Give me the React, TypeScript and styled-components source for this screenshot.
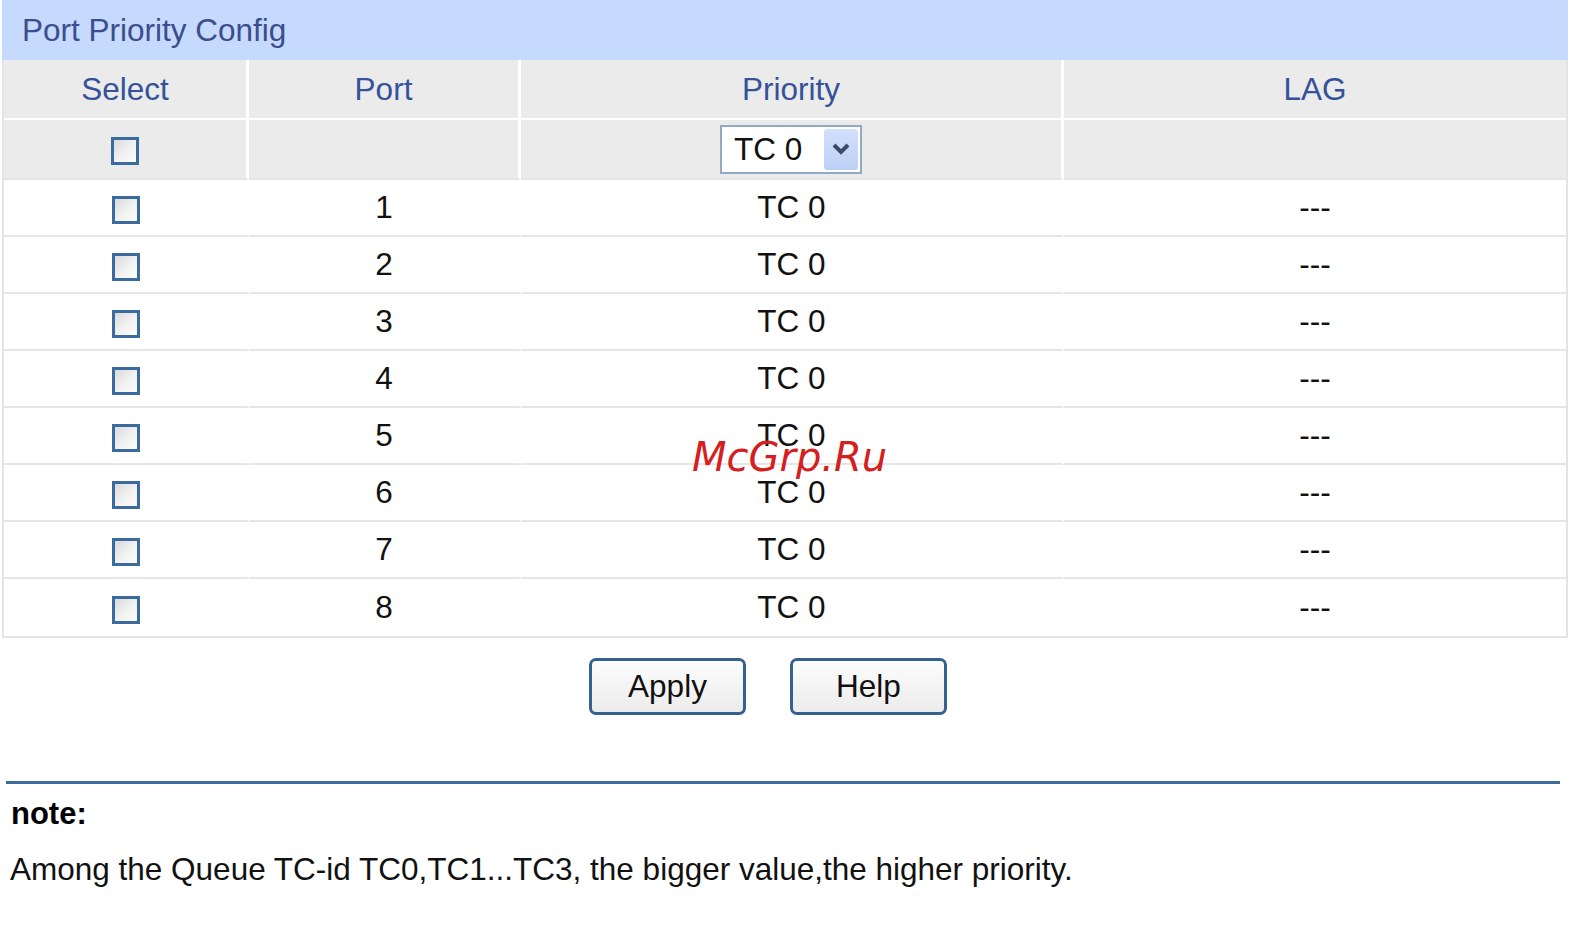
import React from 'react'
import styled, { createGlobalStyle } from 'styled-components'

const GlobalStyle = createGlobalStyle`
  html, body {
    margin: 0;
    padding: 0;
    background: #ffffff;
    font-family: "Liberation Sans", Arial, sans-serif;
  }
`

const Page = styled.div`
  position: relative;
  width: 1589px;
  height: 931px;
  padding-left: 2px;
  box-sizing: border-box;
  overflow: hidden;
`

const TitleBar = styled.div`
  width: 1566px;
  height: 60px;
  background: #c6d9fe;
  color: #3b4d8c;
  font-size: 31.5px;
  display: flex;
  align-items: center;
  padding-left: 20px;
  box-sizing: border-box;
`

const Table = styled.table`
  width: 1566px;
  border-collapse: separate;
  border-spacing: 0;
  table-layout: fixed;
  border-left: 2px solid #e4e4e4;
  border-right: 2px solid #e4e4e4;
  border-bottom: 2px solid #e4e4e4;
  font-size: 31.5px;
`

const HeadCell = styled.th`
  height: 60px;
  box-sizing: border-box;
  padding: 0;
  font-weight: normal;
  color: #34529a;
  background: #ebebeb;
  border-right: 3px solid #ffffff;
  border-bottom: 2px solid #ffffff;
  text-align: center;
  &:last-child {
    border-right: none;
  }
`

const GrayCell = styled.td`
  height: 60px;
  box-sizing: border-box;
  padding: 0;
  background: #ebebeb;
  border-right: 3px solid #ffffff;
  border-bottom: 2px solid #e4e4e4;
  text-align: center;
  &:last-child {
    border-right: none;
  }
`

const Cell = styled.td`
  height: 57px;
  box-sizing: border-box;
  padding: 0;
  color: #111111;
  background: #ffffff;
  border-right: 2px solid #ffffff;
  border-bottom: 2px solid #e6e6e6;
  text-align: center;
  &:last-child {
    border-right: none;
  }
  tr:last-child > & {
    border-bottom: none;
  }
`

const Check = styled.span`
  display: inline-block;
  width: 28px;
  height: 28px;
  box-sizing: border-box;
  border: 3px solid #3b6a9e;
  background: linear-gradient(135deg, #dadada 0%, #f2f2f2 55%, #fcfcfc 100%);
  vertical-align: middle;
`

const SelectBox = styled.div`
  display: inline-flex;
  align-items: center;
  justify-content: space-between;
  width: 142px;
  height: 49px;
  box-sizing: border-box;
  border: 2px solid #92a9c6;
  background: #ffffff;
  padding: 0 2px 0 12px;
  vertical-align: middle;
  color: #111111;
  font-size: 31.5px;
`

const ArrowButton = styled.span`
  display: flex;
  align-items: center;
  justify-content: center;
  width: 34px;
  height: 41px;
  border-radius: 3px;
  background: linear-gradient(180deg, #d3e0fb 0%, #bccff6 100%);
`

const Buttons = styled.div`
  display: flex;
  justify-content: center;
  gap: 44px;
  width: 1566px;
  padding: 20px 34px 0 0;
  box-sizing: border-box;
  height: 143px;
`

const Button = styled.button`
  width: 157px;
  height: 57px;
  border: 3px solid #35618f;
  border-radius: 7px;
  background: linear-gradient(180deg, #fcfcfc 0%, #ececec 100%);
  font-family: "Liberation Sans", Arial, sans-serif;
  font-size: 31.5px;
  color: #111111;
  padding: 0;
`

const Rule = styled.div`
  margin-left: 4px;
  width: 1554px;
  height: 3px;
  background: #3a6d9c;
`

const NoteTitle = styled.div`
  margin: 12px 0 0 9px;
  font-size: 31px;
  font-weight: bold;
  color: #000000;
`

const NoteText = styled.div`
  margin: 19px 0 0 8px;
  font-size: 31.5px;
  color: #111111;
`

const Watermark = styled.div`
  position: absolute;
  left: 692px;
  top: 434px;
  font-family: "DejaVu Sans", Verdana, sans-serif;
  font-style: italic;
  font-size: 40px;
  color: #d42020;
  pointer-events: none;
`

const Chevron = () => (
  <svg width="18" height="12" viewBox="0 0 18 12">
    <path d="M2 2 L9 9 L16 2" fill="none" stroke="#3b4a66" strokeWidth="4" />
  </svg>
)

const ports = [1, 2, 3, 4, 5, 6, 7, 8]

export default function App() {
  return (
    <Page>
      <GlobalStyle />
      <TitleBar>Port Priority Config</TitleBar>
      <Table>
        <colgroup>
          <col style={{ width: 245 }} />
          <col style={{ width: 272 }} />
          <col style={{ width: 543 }} />
          <col />
        </colgroup>
        <thead>
          <tr>
            <HeadCell>Select</HeadCell>
            <HeadCell>Port</HeadCell>
            <HeadCell>Priority</HeadCell>
            <HeadCell>LAG</HeadCell>
          </tr>
        </thead>
        <tbody>
          <tr>
            <GrayCell>
              <Check />
            </GrayCell>
            <GrayCell />
            <GrayCell>
              <SelectBox>
                TC 0
                <ArrowButton>
                  <Chevron />
                </ArrowButton>
              </SelectBox>
            </GrayCell>
            <GrayCell />
          </tr>
          {ports.map((p) => (
            <tr key={p}>
              <Cell>
                <Check />
              </Cell>
              <Cell>{p}</Cell>
              <Cell>TC 0</Cell>
              <Cell>---</Cell>
            </tr>
          ))}
        </tbody>
      </Table>
      <Buttons>
        <Button>Apply</Button>
        <Button>Help</Button>
      </Buttons>
      <Rule />
      <NoteTitle>note:</NoteTitle>
      <NoteText>Among the Queue TC-id TC0,TC1...TC3, the bigger value,the higher priority.</NoteText>
      <Watermark>McGrp.Ru</Watermark>
    </Page>
  )
}
